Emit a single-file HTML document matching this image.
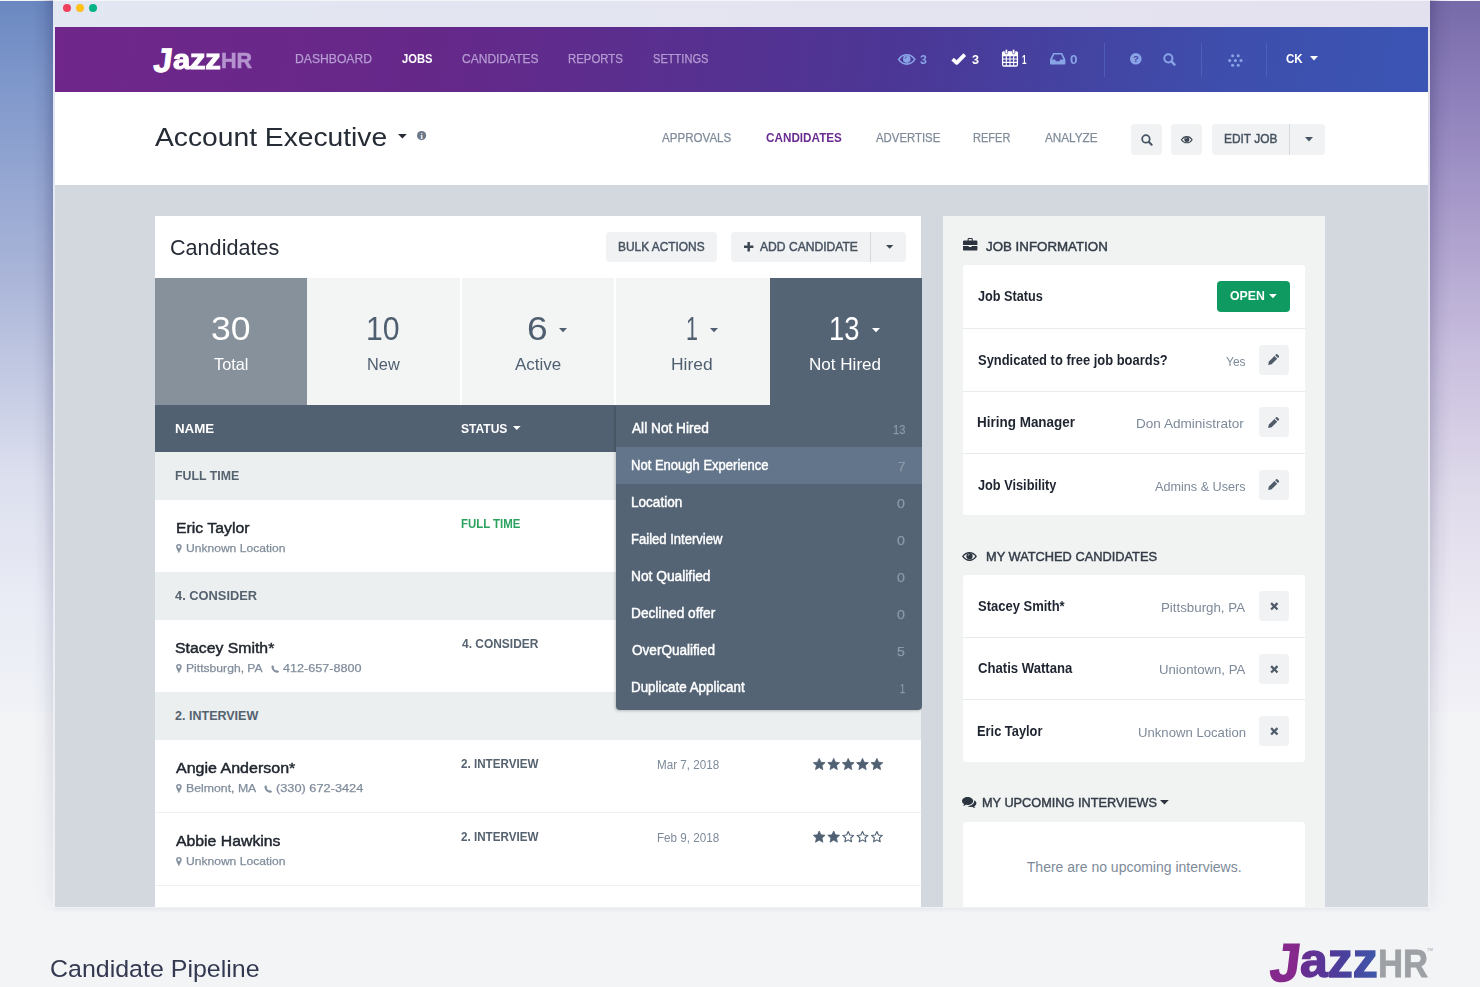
<!DOCTYPE html>
<html lang="en">
<head>
<meta charset="utf-8">
<title>Candidate Pipeline</title>
<style>
*{box-sizing:border-box;margin:0;padding:0}
html,body{width:1480px;height:987px;overflow:hidden}
body{position:relative;background:#f3f4f6;font-family:"Liberation Sans",Arial,sans-serif;color:#2b3440}
.a,.t{position:absolute}
.t{white-space:nowrap;line-height:1;transform-origin:0 0}
svg{position:absolute;overflow:visible}
#bgL{left:0;top:0;width:760px;height:712px;background:linear-gradient(180deg,#6a88c0 0%,#7e97cb 11%,#aab5d8 39%,#dcdfee 67%,#eaecf5 85%,#f0f2f7 100%)}
#bgR{left:740px;top:0;width:740px;height:712px;background:linear-gradient(180deg,#776aa9 0%,#8b7db9 12%,#a99ccb 30%,#c9bfde 50%,#e0dbeb 70%,#ebe8f2 85%,#f2f1f7 100%)}
#topline{left:0;top:0;width:1480px;height:1px;background:#f4f5f9}
#win{left:53px;top:1px;width:1377px;height:907px;background:linear-gradient(180deg,rgba(240,242,245,0) 0%,rgba(240,242,245,0) 8%,rgba(240,242,245,1) 100%),linear-gradient(90deg,#e2e7f2,#e4e1ee)}
.sh{top:0;width:20px;height:914px;-webkit-mask-image:linear-gradient(180deg,#000 0%,rgba(0,0,0,.7) 50%,rgba(0,0,0,.16) 98%,transparent 100%);mask-image:linear-gradient(180deg,#000 0%,rgba(0,0,0,.7) 50%,rgba(0,0,0,.16) 98%,transparent 100%)}
#nav{left:55px;top:27px;width:1373px;height:65px;background:linear-gradient(100deg,#70268a 0%,#64298a 30%,#4b3796 62%,#3e4eac 85%,#3b55b4 100%)}
#sub{left:55px;top:92px;width:1373px;height:93px;background:#fff}
#body{left:55px;top:185px;width:1373px;height:722px;background:#d3d8df}
.dot{width:8.2px;height:8.2px;border-radius:50%;top:4.3px}
.btn{background:#f0f2f3;border-radius:4px}
.sep{height:1px;background:#e9eced}
.vd{width:1px;top:43px;height:34px;background:rgba(90,110,200,.55)}
.grp{left:155px;width:766px;height:48px;background:#eceff0}
.sq{left:1259px;width:30.4px;height:30px;background:#f0f2f3;border-radius:4px}
.logo{font-weight:bold;letter-spacing:-1px}
</style>
</head>
<body>
<div id="bgL" class="a"></div>
<div id="bgR" class="a"></div>
<div id="topline" class="a"></div>
<div class="a sh" style="left:33px;background:linear-gradient(90deg,rgba(40,40,90,0),rgba(40,40,90,.07) 50%,rgba(40,40,90,.26))"></div>
<div class="a sh" style="left:1430px;background:linear-gradient(270deg,rgba(40,40,90,0),rgba(40,40,90,.07) 50%,rgba(40,40,90,.26))"></div>
<div class="a" style="left:53px;top:908px;width:1377px;height:5px;background:linear-gradient(180deg,rgba(40,40,90,.05),rgba(40,40,90,0))"></div>
<div id="win" class="a"></div>
<div class="a dot" style="left:63px;background:#ee3f5c"></div>
<div class="a dot" style="left:76px;background:#fcc018"></div>
<div class="a dot" style="left:89px;background:#07b285"></div>
<div id="nav" class="a"></div>
<div id="sub" class="a"></div>
<div id="body" class="a"></div>
<!--NAV-->
<div class="a vd" style="left:1104px"></div>
<div class="a vd" style="left:1201px"></div>
<div class="a vd" style="left:1266px"></div>
<!--SUB-->
<div class="a btn" style="left:1131px;top:124px;width:31px;height:31px"></div>
<div class="a btn" style="left:1171px;top:124px;width:31px;height:31px"></div>
<div class="a btn" style="left:1212px;top:124px;width:113px;height:31px"></div>
<div class="a" style="left:1289px;top:124px;width:1px;height:31px;background:#d5d9dd"></div>
<!--CARD-->
<div class="a" style="left:155px;top:216px;width:766px;height:691px;background:#fff"></div>
<div class="a btn" style="left:606px;top:232px;width:111px;height:30px"></div>
<div class="a btn" style="left:731px;top:232px;width:175px;height:30px"></div>
<div class="a" style="left:870px;top:232px;width:1px;height:30px;background:#d5d9dd"></div>
<div class="a" style="left:155px;top:278px;width:152px;height:127px;background:#86919c"></div>
<div class="a" style="left:307px;top:278px;width:153px;height:127px;background:#f3f5f5"></div>
<div class="a" style="left:462px;top:278px;width:152px;height:127px;background:#f3f5f5"></div>
<div class="a" style="left:616px;top:278px;width:154px;height:127px;background:#f3f5f5"></div>
<div class="a" style="left:155px;top:405px;width:766px;height:47px;background:#526172"></div>
<div class="a grp" style="top:452px"></div>
<div class="a grp" style="top:572px"></div>
<div class="a grp" style="top:692px"></div>
<div class="a sep" style="left:155px;top:812px;width:766px;background:#eef0f1"></div>
<div class="a sep" style="left:155px;top:885px;width:766px;background:#eef0f1"></div>
<!--dropdown-->
<div class="a" style="left:616px;top:405px;width:306px;height:305px;background:#546475;border-radius:0 0 4px 4px;box-shadow:-1px 1px 3px rgba(0,0,0,.22);clip-path:inset(0 0 -8px -8px)"></div>
<div class="a" style="left:770px;top:278px;width:152px;height:130px;background:#546475"></div>
<div class="a" style="left:616px;top:447px;width:306px;height:37px;background:#63758a"></div>
<!--SIDE-->
<div class="a" style="left:943px;top:216px;width:382px;height:691px;background:#f1f3f3"></div>
<div class="a" style="left:963px;top:265px;width:342px;height:250px;background:#fff;border-radius:3px"></div>
<div class="a sep" style="left:963px;top:328px;width:342px"></div>
<div class="a sep" style="left:963px;top:391px;width:342px"></div>
<div class="a sep" style="left:963px;top:453px;width:342px"></div>
<div class="a" style="left:1217px;top:281px;width:72.5px;height:30.5px;background:#0e9a60;border-radius:4px"></div>
<div class="a sq" style="top:345px"></div>
<div class="a sq" style="top:407px"></div>
<div class="a sq" style="top:470px"></div>
<div class="a" style="left:963px;top:575px;width:342px;height:187px;background:#fff;border-radius:3px"></div>
<div class="a sep" style="left:963px;top:637px;width:342px"></div>
<div class="a sep" style="left:963px;top:699px;width:342px"></div>
<div class="a sq" style="top:591px"></div>
<div class="a sq" style="top:654px"></div>
<div class="a sq" style="top:716px"></div>
<div class="a" style="left:963px;top:822px;width:342px;height:85px;background:#fff;border-radius:3px 3px 0 0"></div>
<svg style="left:898px;top:53.5px" width="17.5" height="10.8" viewBox="0 0 18 11"><path d="M0.7 5.5C3.2 1.7 6 0.7 9 0.7S14.8 1.7 17.3 5.5C14.8 9.3 12 10.3 9 10.3S3.2 9.3 0.7 5.5z" fill="none" stroke="#88a3e6" stroke-width="1.7"/><circle cx="9" cy="5.2" r="3.9" fill="#88a3e6"/><path d="M7.2 4.6A2 2 0 0 1 9 2.9" stroke="#4a399c" stroke-width="0.9" fill="none"/></svg>
<svg style="left:951px;top:52.8px" width="15.4" height="11.5" viewBox="0 0 15.4 11.5"><path d="M1.6 6.1L5.7 9.8L13.8 1.7" fill="none" stroke="#fff" stroke-width="3.8" stroke-linejoin="round"/></svg>
<svg style="left:1002px;top:49.2px" width="16" height="17.6" viewBox="0 0 16 17.6"><rect x="0.6" y="2.8" width="14.8" height="14.2" rx="1.2" fill="none" stroke="#fff" stroke-width="1.3"/><path d="M0.6 6.6H15.4M0.6 10H15.4M0.6 13.4H15.4M4.3 6.6V17M8 6.6V17M11.7 6.6V17" stroke="#fff" stroke-width="1.1"/><rect x="0.6" y="2.8" width="14.8" height="3.4" fill="#fff"/><rect x="3.2" y="0.3" width="2.4" height="4.6" rx="1.2" fill="#fff" stroke="#4a3d9f" stroke-width="0.7"/><rect x="10.4" y="0.3" width="2.4" height="4.6" rx="1.2" fill="#fff" stroke="#4a3d9f" stroke-width="0.7"/></svg>
<svg style="left:1050px;top:52.8px" width="15.4" height="11.5" viewBox="0 0 15.4 11.5"><path d="M3.2 0H12.2L15.4 6.4V10.5A1 1 0 0 1 14.4 11.5H1A1 1 0 0 1 0 10.5V6.4zM4.3 1.6L2 6.4H5L6 8.2H9.4L10.4 6.4H13.4L11.1 1.6z" fill="#88a3e6" fill-rule="evenodd"/></svg>
<svg style="left:1129.9px;top:53.2px" width="11.6" height="11.6" viewBox="0 0 11.6 11.6"><circle cx="5.8" cy="5.8" r="5.8" fill="#88a3e6"/><text x="5.8" y="9.2" font-family="Liberation Sans, sans-serif" font-weight="bold" font-size="9.5" text-anchor="middle" fill="#4643a4">?</text></svg>
<svg style="left:1163.1000000000001px;top:53.300000000000004px" width="12.6" height="12.6" viewBox="0 0 12 12"><circle cx="5.1" cy="5.1" r="3.9" fill="none" stroke="#88a3e6" stroke-width="1.9"/><path d="M8.2 8.2L11 11" stroke="#88a3e6" stroke-width="2.3" stroke-linecap="round"/></svg>
<svg style="left:0;top:0" width="1" height="1"><circle cx="1232.6" cy="55.7" r="1.55" fill="#88a3e6"/><circle cx="1238.2" cy="55.7" r="1.55" fill="#88a3e6"/><circle cx="1229.7" cy="60.6" r="1.55" fill="#88a3e6"/><circle cx="1235.4" cy="60.6" r="1.55" fill="#88a3e6"/><circle cx="1241" cy="60.6" r="1.55" fill="#88a3e6"/><circle cx="1232.6" cy="65.2" r="1.55" fill="#88a3e6"/><circle cx="1238.2" cy="65.2" r="1.55" fill="#88a3e6"/></svg>
<svg style="left:1310px;top:56.4px" width="8" height="4.4" viewBox="0 0 8 4.4"><path d="M0 0H8L4.0 4.4z" fill="#fff"/></svg>
<svg style="left:397.5px;top:133.8px" width="8.8" height="4.4" viewBox="0 0 8.8 4.4"><path d="M0 0H8.8L4.4 4.4z" fill="#252c36"/></svg>
<svg style="left:417.4px;top:131.2px" width="9.2" height="9.2" viewBox="0 0 9.2 9.2"><circle cx="4.6" cy="4.6" r="4.6" fill="#6c7886"/><text x="4.6" y="7.6" font-family="Liberation Serif, serif" font-weight="bold" font-size="8" text-anchor="middle" fill="#fff">i</text></svg>
<svg style="left:1141.0px;top:134.0px" width="11.6" height="11.6" viewBox="0 0 12 12"><circle cx="5.1" cy="5.1" r="3.9" fill="none" stroke="#465463" stroke-width="1.8"/><path d="M8.2 8.2L11 11" stroke="#465463" stroke-width="2.2" stroke-linecap="round"/></svg>
<svg style="left:1181.3px;top:135.8px" width="11.6" height="7.4" viewBox="0 0 18 11"><path d="M0.7 5.5C3.2 1.7 6 0.7 9 0.7S14.8 1.7 17.3 5.5C14.8 9.3 12 10.3 9 10.3S3.2 9.3 0.7 5.5z" fill="none" stroke="#3c4652" stroke-width="1.7"/><circle cx="9" cy="5.2" r="3.9" fill="#3c4652"/><path d="M7.2 4.6A2 2 0 0 1 9 2.9" stroke="#f1f3f4" stroke-width="0.9" fill="none"/></svg>
<svg style="left:1304.8px;top:137.3px" width="8.0" height="4.6" viewBox="0 0 8.0 4.6"><path d="M0 0H8.0L4.0 4.6z" fill="#465463"/></svg>
<svg style="left:743.7px;top:242.2px" width="9.4" height="9.4" viewBox="0 0 10 10"><path d="M5 0V10M0 5H10" stroke="#3c4652" stroke-width="2.6"/></svg>
<svg style="left:886px;top:245.2px" width="7.4" height="3.8" viewBox="0 0 7.4 3.8"><path d="M0 0H7.4L3.7 3.8z" fill="#3c4652"/></svg>
<svg style="left:559px;top:327.6px" width="8" height="4.2" viewBox="0 0 8 4.2"><path d="M0 0H8L4.0 4.2z" fill="#4f5f70"/></svg>
<svg style="left:709.8px;top:327.6px" width="8.0" height="4.2" viewBox="0 0 8.0 4.2"><path d="M0 0H8.0L4.0 4.2z" fill="#4f5f70"/></svg>
<svg style="left:872.3px;top:327.6px" width="8.0" height="4.2" viewBox="0 0 8.0 4.2"><path d="M0 0H8.0L4.0 4.2z" fill="#fff"/></svg>
<svg style="left:512.6px;top:426px" width="7.6" height="4" viewBox="0 0 7.6 4"><path d="M0 0H7.6L3.8 4z" fill="#fff"/></svg>
<svg style="left:175.9px;top:544.2px" width="5.8" height="9.4" viewBox="0 0 6 10"><path d="M3 0A3 3 0 0 1 6 3C6 4.6 4 7.6 3 10C2 7.6 0 4.6 0 3A3 3 0 0 1 3 0zM3 1.7A1.3 1.3 0 1 0 3 4.3A1.3 1.3 0 1 0 3 1.7z" fill="#8492a0" fill-rule="evenodd"/></svg>
<svg style="left:175.9px;top:664.2px" width="5.8" height="9.4" viewBox="0 0 6 10"><path d="M3 0A3 3 0 0 1 6 3C6 4.6 4 7.6 3 10C2 7.6 0 4.6 0 3A3 3 0 0 1 3 0zM3 1.7A1.3 1.3 0 1 0 3 4.3A1.3 1.3 0 1 0 3 1.7z" fill="#8492a0" fill-rule="evenodd"/></svg>
<svg style="left:175.9px;top:784.2px" width="5.8" height="9.4" viewBox="0 0 6 10"><path d="M3 0A3 3 0 0 1 6 3C6 4.6 4 7.6 3 10C2 7.6 0 4.6 0 3A3 3 0 0 1 3 0zM3 1.7A1.3 1.3 0 1 0 3 4.3A1.3 1.3 0 1 0 3 1.7z" fill="#8492a0" fill-rule="evenodd"/></svg>
<svg style="left:175.9px;top:857.2px" width="5.8" height="9.4" viewBox="0 0 6 10"><path d="M3 0A3 3 0 0 1 6 3C6 4.6 4 7.6 3 10C2 7.6 0 4.6 0 3A3 3 0 0 1 3 0zM3 1.7A1.3 1.3 0 1 0 3 4.3A1.3 1.3 0 1 0 3 1.7z" fill="#8492a0" fill-rule="evenodd"/></svg>
<svg style="left:270.7px;top:664.8px" width="8.5" height="8" viewBox="0 0 10 10"><path d="M2.2 0.3L3.9 2.9L2.9 3.9C3.5 5.2 4.8 6.5 6.1 7.1L7.1 6.1L9.7 7.8C9.6 8.9 8.6 9.8 7.4 9.8C3.5 9.4 0.6 6.5 0.2 2.6C0.2 1.4 1.1 0.4 2.2 0.3z" fill="#8492a0"/></svg>
<svg style="left:264.2px;top:784.8px" width="8.5" height="8" viewBox="0 0 10 10"><path d="M2.2 0.3L3.9 2.9L2.9 3.9C3.5 5.2 4.8 6.5 6.1 7.1L7.1 6.1L9.7 7.8C9.6 8.9 8.6 9.8 7.4 9.8C3.5 9.4 0.6 6.5 0.2 2.6C0.2 1.4 1.1 0.4 2.2 0.3z" fill="#8492a0"/></svg>
<svg style="left:0;top:0" width="1" height="1"><polygon points="819.20,758.40 820.91,762.24 825.10,762.68 821.97,765.50 822.84,769.62 819.20,767.51 815.56,769.62 816.43,765.50 813.30,762.68 817.49,762.24" fill="#4f6073" stroke="#4f6073" stroke-width="0.8" stroke-linejoin="round"/></svg>
<svg style="left:0;top:0" width="1" height="1"><polygon points="819.20,831.00 820.91,834.84 825.10,835.28 821.97,838.10 822.84,842.22 819.20,840.11 815.56,842.22 816.43,838.10 813.30,835.28 817.49,834.84" fill="#4f6073" stroke="#4f6073" stroke-width="0.8" stroke-linejoin="round"/></svg>
<svg style="left:0;top:0" width="1" height="1"><polygon points="833.70,758.40 835.41,762.24 839.60,762.68 836.47,765.50 837.34,769.62 833.70,767.51 830.06,769.62 830.93,765.50 827.80,762.68 831.99,762.24" fill="#4f6073" stroke="#4f6073" stroke-width="0.8" stroke-linejoin="round"/></svg>
<svg style="left:0;top:0" width="1" height="1"><polygon points="833.70,831.00 835.41,834.84 839.60,835.28 836.47,838.10 837.34,842.22 833.70,840.11 830.06,842.22 830.93,838.10 827.80,835.28 831.99,834.84" fill="#4f6073" stroke="#4f6073" stroke-width="0.8" stroke-linejoin="round"/></svg>
<svg style="left:0;top:0" width="1" height="1"><polygon points="848.20,758.40 849.91,762.24 854.10,762.68 850.97,765.50 851.84,769.62 848.20,767.51 844.56,769.62 845.43,765.50 842.30,762.68 846.49,762.24" fill="#4f6073" stroke="#4f6073" stroke-width="0.8" stroke-linejoin="round"/></svg>
<svg style="left:0;top:0" width="1" height="1"><polygon points="848.20,831.50 849.77,835.03 853.62,835.44 850.75,838.03 851.55,841.81 848.20,839.88 844.85,841.81 845.65,838.03 842.78,835.44 846.63,835.03" fill="none" stroke="#4f6073" stroke-width="1.1" stroke-linejoin="round"/></svg>
<svg style="left:0;top:0" width="1" height="1"><polygon points="862.50,758.40 864.21,762.24 868.40,762.68 865.27,765.50 866.14,769.62 862.50,767.51 858.86,769.62 859.73,765.50 856.60,762.68 860.79,762.24" fill="#4f6073" stroke="#4f6073" stroke-width="0.8" stroke-linejoin="round"/></svg>
<svg style="left:0;top:0" width="1" height="1"><polygon points="862.50,831.50 864.07,835.03 867.92,835.44 865.05,838.03 865.85,841.81 862.50,839.88 859.15,841.81 859.95,838.03 857.08,835.44 860.93,835.03" fill="none" stroke="#4f6073" stroke-width="1.1" stroke-linejoin="round"/></svg>
<svg style="left:0;top:0" width="1" height="1"><polygon points="876.90,758.40 878.61,762.24 882.80,762.68 879.67,765.50 880.54,769.62 876.90,767.51 873.26,769.62 874.13,765.50 871.00,762.68 875.19,762.24" fill="#4f6073" stroke="#4f6073" stroke-width="0.8" stroke-linejoin="round"/></svg>
<svg style="left:0;top:0" width="1" height="1"><polygon points="876.90,831.50 878.47,835.03 882.32,835.44 879.45,838.03 880.25,841.81 876.90,839.88 873.55,841.81 874.35,838.03 871.48,835.44 875.33,835.03" fill="none" stroke="#4f6073" stroke-width="1.1" stroke-linejoin="round"/></svg>
<svg style="left:962.5px;top:238.4px" width="14.4" height="12.6" viewBox="0 0 14.4 12.6"><path d="M4.6 2.4V1.2A1.2 1.2 0 0 1 5.8 0H8.6A1.2 1.2 0 0 1 9.8 1.2V2.4H13.2A1.2 1.2 0 0 1 14.4 3.6V6.9H0V3.6A1.2 1.2 0 0 1 1.2 2.4zM5.7 2.4H8.7V1.1H5.7zM0 7.9H5.8V9H8.6V7.9H14.4V11.4A1.2 1.2 0 0 1 13.2 12.6H1.2A1.2 1.2 0 0 1 0 11.4z" fill="#2c343f" fill-rule="evenodd"/></svg>
<svg style="left:1269px;top:294.2px" width="7.8" height="4.2" viewBox="0 0 7.8 4.2"><path d="M0 0H7.8L3.9 4.2z" fill="#fff"/></svg>
<svg style="left:1268.1000000000001px;top:354.0px" width="11.2" height="11.2" viewBox="0 0 12 12"><path d="M0.2 11.8L0.9 8.1L6.9 2.1L9.9 5.1L3.9 11.1zM7.7 1.3L8.6 0.4A1 1 0 0 1 10 0.4L11.6 2A1 1 0 0 1 11.6 3.4L10.7 4.3z" fill="#4f5b69"/></svg>
<svg style="left:1268.1000000000001px;top:416.59999999999997px" width="11.2" height="11.2" viewBox="0 0 12 12"><path d="M0.2 11.8L0.9 8.1L6.9 2.1L9.9 5.1L3.9 11.1zM7.7 1.3L8.6 0.4A1 1 0 0 1 10 0.4L11.6 2A1 1 0 0 1 11.6 3.4L10.7 4.3z" fill="#4f5b69"/></svg>
<svg style="left:1268.1000000000001px;top:479.2px" width="11.2" height="11.2" viewBox="0 0 12 12"><path d="M0.2 11.8L0.9 8.1L6.9 2.1L9.9 5.1L3.9 11.1zM7.7 1.3L8.6 0.4A1 1 0 0 1 10 0.4L11.6 2A1 1 0 0 1 11.6 3.4L10.7 4.3z" fill="#4f5b69"/></svg>
<svg style="left:962.1px;top:552.2px" width="15" height="8.8" viewBox="0 0 18 11"><path d="M0.7 5.5C3.2 1.7 6 0.7 9 0.7S14.8 1.7 17.3 5.5C14.8 9.3 12 10.3 9 10.3S3.2 9.3 0.7 5.5z" fill="none" stroke="#2c343f" stroke-width="1.7"/><circle cx="9" cy="5.2" r="3.9" fill="#2c343f"/><path d="M7.2 4.6A2 2 0 0 1 9 2.9" stroke="#f1f3f3" stroke-width="0.9" fill="none"/></svg>
<svg style="left:1269.6000000000001px;top:602.1px" width="8.6" height="8.6" viewBox="0 0 10 10"><path d="M1.3 1.3L8.7 8.7M8.7 1.3L1.3 8.7" stroke="#4f5b69" stroke-width="2.6" stroke-linecap="butt"/></svg>
<svg style="left:1269.6000000000001px;top:664.7px" width="8.6" height="8.6" viewBox="0 0 10 10"><path d="M1.3 1.3L8.7 8.7M8.7 1.3L1.3 8.7" stroke="#4f5b69" stroke-width="2.6" stroke-linecap="butt"/></svg>
<svg style="left:1269.6000000000001px;top:727.3000000000001px" width="8.6" height="8.6" viewBox="0 0 10 10"><path d="M1.3 1.3L8.7 8.7M8.7 1.3L1.3 8.7" stroke="#4f5b69" stroke-width="2.6" stroke-linecap="butt"/></svg>
<svg style="left:962.3px;top:797px" width="14.4" height="11" viewBox="0 0 14.4 11"><path d="M5.6 0C8.7 0 11.2 1.8 11.2 4S8.7 8 5.6 8C5.1 8 4.6 7.95 4.1 7.85C3.3 8.5 2.2 8.9 1 9C1.6 8.4 2 7.7 2.1 7C0.8 6.3 0 5.2 0 4C0 1.8 2.5 0 5.6 0zM12.3 9.3C12.4 9.9 12.8 10.5 13.4 11C12.3 10.9 11.3 10.5 10.5 9.9C10 10 9.5 10.05 9 10.05C7.6 10.05 6.3 9.7 5.4 9C5.5 9 5.6 9 5.6 9C9.3 9 12.2 6.8 12.2 4C12.2 3.7 12.2 3.5 12.1 3.2C13.5 3.9 14.4 5 14.4 6.2C14.4 7.4 13.6 8.5 12.3 9.3z" fill="#2c343f"/></svg>
<svg style="left:1159.8px;top:800px" width="8.8" height="4.4" viewBox="0 0 8.8 4.4"><path d="M0 0H8.8L4.4 4.4z" fill="#2c343f"/></svg>
<div class="t" style="left:294.5px;top:52.7px;font-size:12.5px;color:#b79dd3;-webkit-text-stroke:.25px;transform:scaleX(0.973);">DASHBOARD</div>
<div class="t" style="left:401.7px;top:52.7px;font-size:12.5px;color:#ffffff;font-weight:bold;transform:scaleX(0.898);">JOBS</div>
<div class="t" style="left:461.9px;top:52.7px;font-size:12.5px;color:#b79dd3;-webkit-text-stroke:.25px;transform:scaleX(0.962);">CANDIDATES</div>
<div class="t" style="left:568.1px;top:52.7px;font-size:12.5px;color:#b79dd3;-webkit-text-stroke:.25px;transform:scaleX(0.912);">REPORTS</div>
<div class="t" style="left:653.0px;top:52.7px;font-size:12.5px;color:#b79dd3;-webkit-text-stroke:.25px;transform:scaleX(0.887);">SETTINGS</div>
<div class="t" style="left:919.8px;top:53.7px;font-size:12.5px;color:#88a3e6;font-weight:bold;transform:scaleX(0.992);">3</div>
<div class="t" style="left:971.5px;top:53.7px;font-size:12.5px;color:#ffffff;font-weight:bold;transform:scaleX(1.008);">3</div>
<div class="t" style="left:1021.9px;top:53.7px;font-size:12.5px;color:#ffffff;font-weight:bold;transform:scaleX(0.644);">1</div>
<div class="t" style="left:1069.9px;top:53.7px;font-size:12.5px;color:#88a3e6;font-weight:bold;transform:scaleX(1.083);">0</div>
<div class="t" style="left:1286.0px;top:52.9px;font-size:12.5px;color:#ffffff;font-weight:bold;transform:scaleX(0.927);">CK</div>
<div class="t" style="left:155.0px;top:123.6px;font-size:26.5px;color:#252c36;transform:scaleX(1.065);">Account Executive</div>
<div class="t" style="left:662.2px;top:131.9px;font-size:12.5px;color:#7f8b99;-webkit-text-stroke:.25px;transform:scaleX(0.926);">APPROVALS</div>
<div class="t" style="left:765.5px;top:131.9px;font-size:12.5px;color:#6a2c91;font-weight:bold;transform:scaleX(0.937);">CANDIDATES</div>
<div class="t" style="left:875.7px;top:131.9px;font-size:12.5px;color:#7f8b99;-webkit-text-stroke:.25px;transform:scaleX(0.910);">ADVERTISE</div>
<div class="t" style="left:973.1px;top:131.9px;font-size:12.5px;color:#7f8b99;-webkit-text-stroke:.25px;transform:scaleX(0.883);">REFER</div>
<div class="t" style="left:1045.0px;top:131.9px;font-size:12.5px;color:#7f8b99;-webkit-text-stroke:.25px;transform:scaleX(0.937);">ANALYZE</div>
<div class="t" style="left:1223.5px;top:132.7px;font-size:12.5px;color:#465260;-webkit-text-stroke:.45px;transform:scaleX(0.952);">EDIT JOB</div>
<div class="t" style="left:170.0px;top:236.5px;font-size:22.5px;color:#252c36;transform:scaleX(0.960);">Candidates</div>
<div class="t" style="left:618.0px;top:240.8px;font-size:12.5px;color:#465260;-webkit-text-stroke:.45px;transform:scaleX(0.952);">BULK ACTIONS</div>
<div class="t" style="left:759.9px;top:240.8px;font-size:12.5px;color:#465260;-webkit-text-stroke:.45px;transform:scaleX(0.968);">ADD CANDIDATE</div>
<div class="t" style="left:210.9px;top:311.9px;font-size:33px;color:#ffffff;transform:scaleX(1.079);">30</div>
<div class="t" style="left:213.7px;top:356.2px;font-size:16.5px;color:#ffffff;transform:scaleX(0.985);">Total</div>
<div class="t" style="left:366.1px;top:311.9px;font-size:33px;color:#4f5f70;transform:scaleX(0.917);">10</div>
<div class="t" style="left:367.4px;top:356.2px;font-size:16.5px;color:#4f5f70;transform:scaleX(0.990);">New</div>
<div class="t" style="left:527.3px;top:311.9px;font-size:33px;color:#4f5f70;transform:scaleX(1.125);">6</div>
<div class="t" style="left:515.0px;top:356.2px;font-size:16.5px;color:#4f5f70;transform:scaleX(1.030);">Active</div>
<div class="t" style="left:685.7px;top:311.9px;font-size:33px;color:#4f5f70;transform:scaleX(0.649);">1</div>
<div class="t" style="left:671.0px;top:356.2px;font-size:16.5px;color:#4f5f70;transform:scaleX(1.056);">Hired</div>
<div class="t" style="left:829.3px;top:311.9px;font-size:33px;color:#ffffff;transform:scaleX(0.829);">13</div>
<div class="t" style="left:809.4px;top:356.2px;font-size:16.5px;color:#ffffff;transform:scaleX(1.034);">Not Hired</div>
<div class="t" style="left:174.6px;top:423.0px;font-size:12.5px;color:#ffffff;font-weight:bold;transform:scaleX(1.064);">NAME</div>
<div class="t" style="left:461.3px;top:423.0px;font-size:12.5px;color:#ffffff;font-weight:bold;transform:scaleX(0.964);">STATUS</div>
<div class="t" style="left:174.7px;top:470.0px;font-size:12.5px;color:#55626f;font-weight:bold;transform:scaleX(0.986);">FULL TIME</div>
<div class="t" style="left:175.3px;top:590.1px;font-size:12.5px;color:#55626f;font-weight:bold;transform:scaleX(1.028);">4. CONSIDER</div>
<div class="t" style="left:175.1px;top:710.1px;font-size:12.5px;color:#55626f;font-weight:bold;">2. INTERVIEW</div>
<div class="t" style="left:175.6px;top:520.1px;font-size:15.5px;color:#20262f;-webkit-text-stroke:.45px;transform:scaleX(1.019);">Eric Taylor</div>
<div class="t" style="left:175.0px;top:640.4px;font-size:15.5px;color:#20262f;-webkit-text-stroke:.45px;transform:scaleX(1.020);">Stacey Smith*</div>
<div class="t" style="left:175.5px;top:760.2px;font-size:15.5px;color:#20262f;-webkit-text-stroke:.45px;transform:scaleX(1.033);">Angie Anderson*</div>
<div class="t" style="left:175.5px;top:832.9px;font-size:15.5px;color:#20262f;-webkit-text-stroke:.45px;transform:scaleX(1.019);">Abbie Hawkins</div>
<div class="t" style="left:185.7px;top:543.0px;font-size:11.5px;color:#808d9c;-webkit-text-stroke:.25px;transform:scaleX(1.050);">Unknown Location</div>
<div class="t" style="left:185.7px;top:663.1px;font-size:11.5px;color:#808d9c;-webkit-text-stroke:.25px;transform:scaleX(1.055);">Pittsburgh, PA</div>
<div class="t" style="left:283.3px;top:663.1px;font-size:11.5px;color:#808d9c;-webkit-text-stroke:.25px;transform:scaleX(1.096);">412-657-8800</div>
<div class="t" style="left:185.6px;top:783.1px;font-size:11.5px;color:#808d9c;-webkit-text-stroke:.25px;transform:scaleX(1.068);">Belmont, MA</div>
<div class="t" style="left:276.0px;top:783.1px;font-size:11.5px;color:#808d9c;-webkit-text-stroke:.25px;transform:scaleX(1.110);">(330) 672-3424</div>
<div class="t" style="left:185.7px;top:856.0px;font-size:11.5px;color:#808d9c;-webkit-text-stroke:.25px;transform:scaleX(1.050);">Unknown Location</div>
<div class="t" style="left:460.8px;top:518.0px;font-size:12px;color:#2ba35f;font-weight:bold;transform:scaleX(0.951);">FULL TIME</div>
<div class="t" style="left:461.5px;top:638.4px;font-size:12px;color:#55626f;font-weight:bold;transform:scaleX(0.996);">4. CONSIDER</div>
<div class="t" style="left:461.2px;top:758.2px;font-size:12px;color:#55626f;font-weight:bold;transform:scaleX(0.970);">2. INTERVIEW</div>
<div class="t" style="left:461.2px;top:831.0px;font-size:12px;color:#55626f;font-weight:bold;transform:scaleX(0.970);">2. INTERVIEW</div>
<div class="t" style="left:657.3px;top:758.4px;font-size:13px;color:#7d8a99;transform:scaleX(0.896);">Mar 7, 2018</div>
<div class="t" style="left:657.3px;top:830.8px;font-size:13px;color:#7d8a99;transform:scaleX(0.896);">Feb 9, 2018</div>
<div class="t" style="left:632.4px;top:421.1px;font-size:14px;color:#ffffff;-webkit-text-stroke:.45px;transform:scaleX(0.977);">All Not Hired</div>
<div class="t" style="left:892.6px;top:422.6px;font-size:13px;color:#8b99a8;-webkit-text-stroke:.25px;transform:scaleX(0.861);">13</div>
<div class="t" style="left:631.4px;top:458.1px;font-size:14px;color:#ffffff;-webkit-text-stroke:.45px;transform:scaleX(0.930);">Not Enough Experience</div>
<div class="t" style="left:897.8px;top:459.6px;font-size:13px;color:#8b99a8;-webkit-text-stroke:.25px;transform:scaleX(1.017);">7</div>
<div class="t" style="left:631.3px;top:495.1px;font-size:14px;color:#ffffff;-webkit-text-stroke:.45px;transform:scaleX(0.968);">Location</div>
<div class="t" style="left:897.1px;top:496.6px;font-size:13px;color:#8b99a8;-webkit-text-stroke:.25px;transform:scaleX(1.092);">0</div>
<div class="t" style="left:631.4px;top:532.1px;font-size:14px;color:#ffffff;-webkit-text-stroke:.45px;transform:scaleX(0.933);">Failed Interview</div>
<div class="t" style="left:897.1px;top:533.6px;font-size:13px;color:#8b99a8;-webkit-text-stroke:.25px;transform:scaleX(1.092);">0</div>
<div class="t" style="left:631.3px;top:569.1px;font-size:14px;color:#ffffff;-webkit-text-stroke:.45px;transform:scaleX(0.982);">Not Qualified</div>
<div class="t" style="left:897.1px;top:570.6px;font-size:13px;color:#8b99a8;-webkit-text-stroke:.25px;transform:scaleX(1.092);">0</div>
<div class="t" style="left:631.3px;top:606.1px;font-size:14px;color:#ffffff;-webkit-text-stroke:.45px;transform:scaleX(0.978);">Declined offer</div>
<div class="t" style="left:897.1px;top:607.6px;font-size:13px;color:#8b99a8;-webkit-text-stroke:.25px;transform:scaleX(1.092);">0</div>
<div class="t" style="left:631.8px;top:643.1px;font-size:14px;color:#ffffff;-webkit-text-stroke:.45px;transform:scaleX(0.969);">OverQualified</div>
<div class="t" style="left:897.4px;top:644.6px;font-size:13px;color:#8b99a8;-webkit-text-stroke:.25px;transform:scaleX(1.080);">5</div>
<div class="t" style="left:631.4px;top:680.1px;font-size:14px;color:#ffffff;-webkit-text-stroke:.45px;transform:scaleX(0.954);">Duplicate Applicant</div>
<div class="t" style="left:899.9px;top:681.6px;font-size:13px;color:#8b99a8;-webkit-text-stroke:.25px;transform:scaleX(0.696);">1</div>
<div class="t" style="left:986.3px;top:239.6px;font-size:13px;color:#333c47;-webkit-text-stroke:.45px;transform:scaleX(1.024);">JOB INFORMATION</div>
<div class="t" style="left:978.0px;top:289.1px;font-size:14.5px;color:#1e2530;font-weight:bold;transform:scaleX(0.874);">Job Status</div>
<div class="t" style="left:1229.5px;top:290.4px;font-size:12.5px;color:#ffffff;font-weight:bold;transform:scaleX(0.982);">OPEN</div>
<div class="t" style="left:977.8px;top:352.6px;font-size:14.5px;color:#1e2530;font-weight:bold;transform:scaleX(0.892);">Syndicated to free job boards?</div>
<div class="t" style="left:1225.8px;top:354.6px;font-size:13.5px;color:#7d8a99;transform:scaleX(0.888);">Yes</div>
<div class="t" style="left:977.2px;top:415.1px;font-size:14.5px;color:#1e2530;font-weight:bold;transform:scaleX(0.929);">Hiring Manager</div>
<div class="t" style="left:1136.4px;top:417.1px;font-size:13.5px;color:#7d8a99;transform:scaleX(1.005);">Don Administrator</div>
<div class="t" style="left:978.0px;top:477.7px;font-size:14.5px;color:#1e2530;font-weight:bold;transform:scaleX(0.879);">Job Visibility</div>
<div class="t" style="left:1154.8px;top:479.6px;font-size:13.5px;color:#7d8a99;transform:scaleX(0.936);">Admins &amp; Users</div>
<div class="t" style="left:985.8px;top:549.5px;font-size:13px;color:#333c47;-webkit-text-stroke:.45px;transform:scaleX(0.985);">MY WATCHED CANDIDATES</div>
<div class="t" style="left:977.8px;top:598.7px;font-size:14.5px;color:#1e2530;font-weight:bold;transform:scaleX(0.896);">Stacey Smith*</div>
<div class="t" style="left:1161.0px;top:600.8px;font-size:13.5px;color:#7d8a99;transform:scaleX(0.985);">Pittsburgh, PA</div>
<div class="t" style="left:977.6px;top:661.2px;font-size:14.5px;color:#1e2530;font-weight:bold;transform:scaleX(0.905);">Chatis Wattana</div>
<div class="t" style="left:1158.7px;top:663.3px;font-size:13.5px;color:#7d8a99;transform:scaleX(0.977);">Uniontown, PA</div>
<div class="t" style="left:977.2px;top:723.7px;font-size:14.5px;color:#1e2530;font-weight:bold;transform:scaleX(0.886);">Eric Taylor</div>
<div class="t" style="left:1137.7px;top:725.8px;font-size:13.5px;color:#7d8a99;transform:scaleX(0.973);">Unknown Location</div>
<div class="t" style="left:982.4px;top:795.5px;font-size:13px;color:#333c47;-webkit-text-stroke:.45px;transform:scaleX(0.979);">MY UPCOMING INTERVIEWS</div>
<div class="t" style="left:1026.8px;top:859.6px;font-size:14px;color:#7d8a99;">There are no upcoming interviews.</div>
<div class="t" style="left:50.3px;top:957.3px;font-size:24.5px;color:#333950;transform:scaleX(1.019);">Candidate Pipeline</div>
<div class="t logo" style="left:156.3px;top:42.7px;color:#fff;-webkit-text-stroke:.9px #fff;line-height:34px;height:34px"><span style="display:inline-block;font-size:34px;line-height:34px;transform-origin:0 0;transform:skewX(-7deg) scaleX(.98);vertical-align:top">J</span><span style="display:inline-block;font-size:28.5px;line-height:28.5px;letter-spacing:-.2px;-webkit-text-stroke:1.1px #fff;transform-origin:0 0;transform:scaleX(1.09);vertical-align:top;position:relative;left:-1.6px;top:2.2px">azz</span></div>
<div class="t logo" style="left:220.8px;top:49.7px;font-size:22.5px;color:#b593cf;letter-spacing:0;-webkit-text-stroke:.5px #b593cf;transform:scaleX(.96)">HR</div>
<div class="t logo" style="left:1274px;top:936.2px;color:#5e2f92;-webkit-text-stroke:1.5px;line-height:53.5px;height:54px"><span style="display:inline-block;font-size:53.5px;line-height:53.5px;color:#86298d;transform-origin:0 0;transform:skewX(-7deg);vertical-align:top">J</span><span style="display:inline-block;font-size:49px;line-height:49px;letter-spacing:0;transform-origin:0 0;transform:scaleX(1.02);vertical-align:top;position:relative;left:-3.2px;top:-.7px;background:linear-gradient(90deg,#6a2c90 0%,#4a3f9c 55%,#3f58a9 100%);-webkit-background-clip:text;background-clip:text;color:transparent;-webkit-text-stroke:1.5px transparent">azz</span></div>
<div class="t logo" style="left:1378.3px;top:944.5px;font-size:38.5px;color:#9da1a5;letter-spacing:0;-webkit-text-stroke:.8px #9da1a5;transform:scaleX(.9)">HR</div>
<div class="t" style="left:1427px;top:948px;font-size:4px;color:#9da1a5">TM</div>

</body>
</html>
